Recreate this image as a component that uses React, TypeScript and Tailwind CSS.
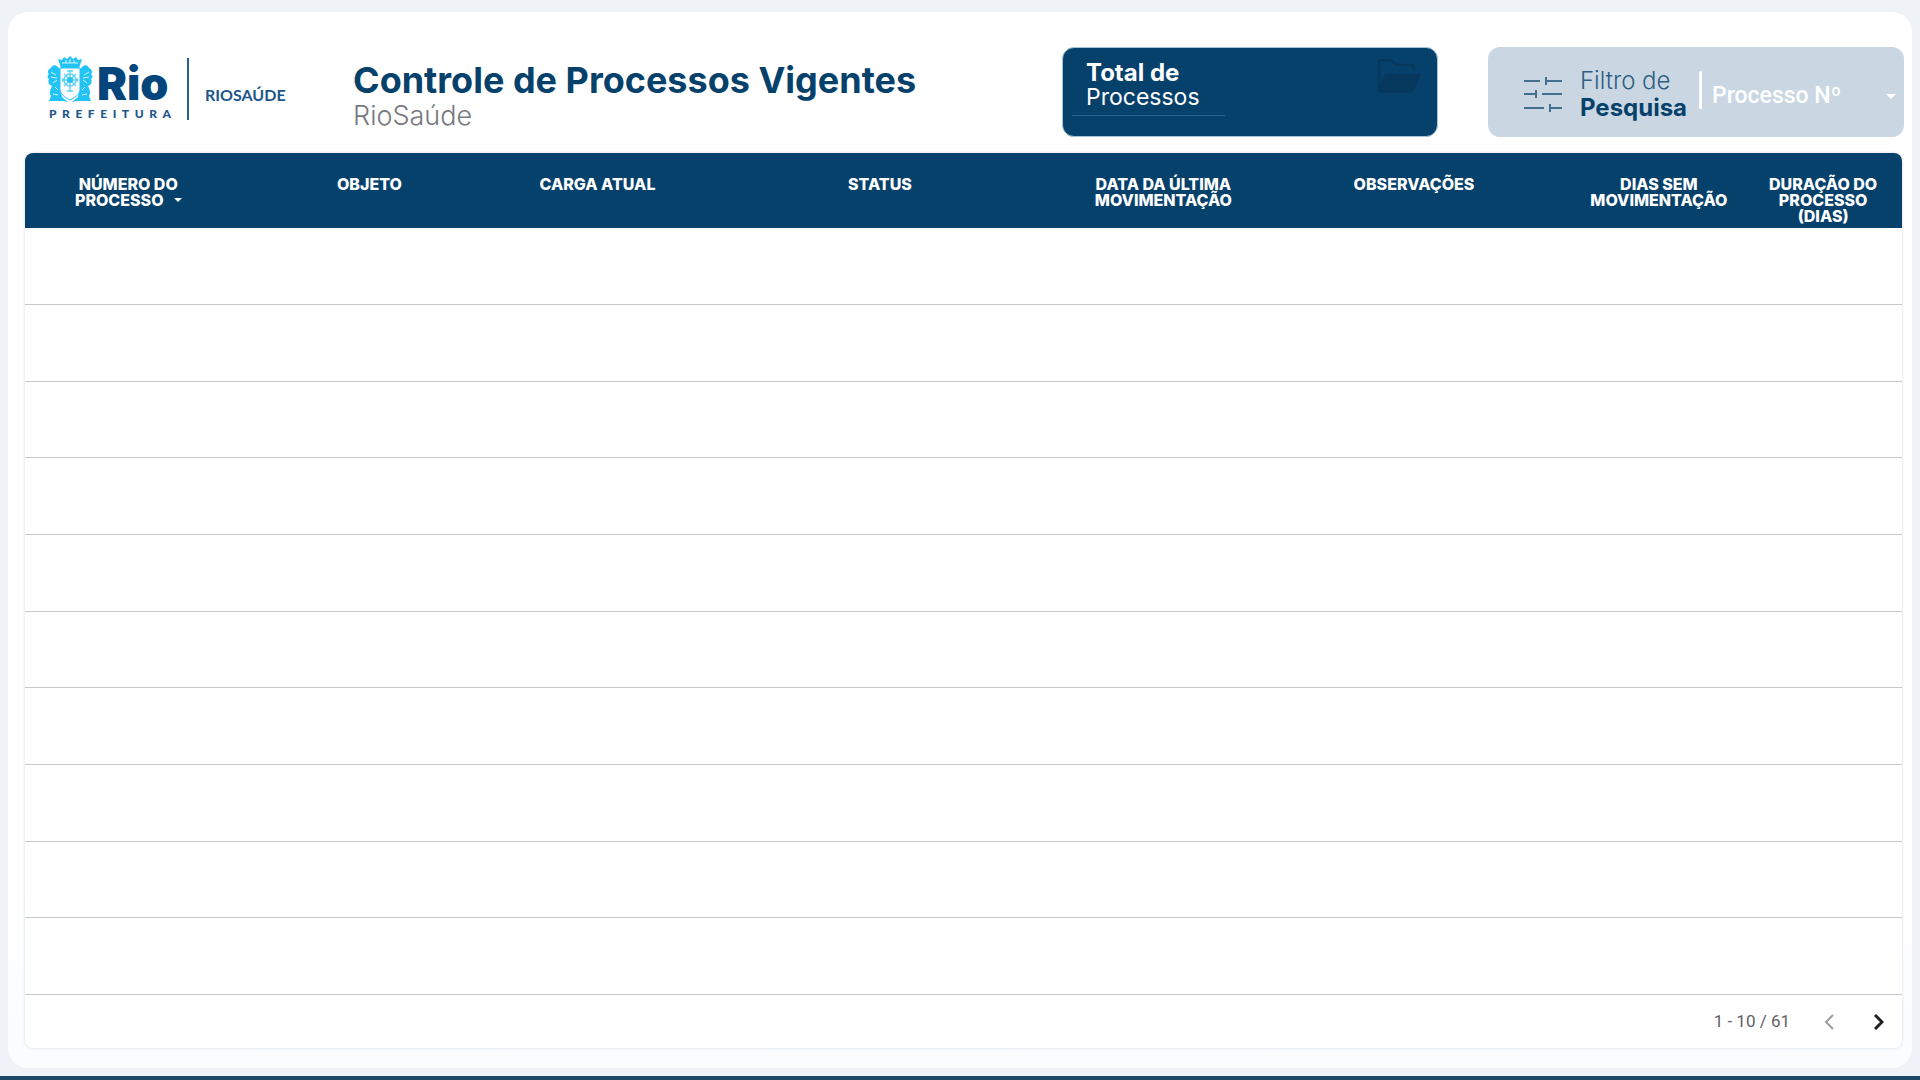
const columns = [
  { lines: ["NÚMERO DO", "PROCESSO"], width: "w-[11%]", sorted: true },
  { lines: ["OBJETO"], width: "w-[14.7%]" },
  { lines: ["CARGA ATUAL"], width: "w-[9.6%]" },
  { lines: ["STATUS"], width: "w-[20.5%]" },
  { lines: ["DATA DA ÚLTIMA", "MOVIMENTAÇÃO"], width: "w-[9.7%]" },
  { lines: ["OBSERVAÇÕES"], width: "w-[17%]" },
  { lines: ["DIAS SEM", "MOVIMENTAÇÃO"], width: "w-[9.1%]" },
  { lines: ["DURAÇÃO DO", "PROCESSO", "(DIAS)"], width: "w-[8.4%]" },
];

const rows = Array.from({ length: 10 }, (_, i) => i);

function Crest() {
  return (
    <svg viewBox="0 0 46 46" className="h-[46px] w-[46px]" aria-hidden="true">
      <g fill="#22c3f6">
        <path d="M11 3l4 1 2-3 3 2 3-3 3 3 3-2 2 3 4-1-3 9H14z" />
        <path d="M11 11C8 8 5 9 4 12c-3 1-4 5-2 6-2 2-2 4 0 5-1 2-1 4 1 6l2 1c-2 4-3 7-1 10l-2 5h14l5 1-6-5-2-10V13z" />
        <path d="M35 11c3-3 6-2 7 1 3 1 4 5 2 6 2 2 2 4 0 5 1 2 1 4-1 6l-2 1c2 4 3 7 1 10l2 5H30l-5 1 6-5 2-10V13z" />
      </g>
      <path d="M13 12h20v21c0 5-4 8-10 11-6-3-10-6-10-11z" fill="#fff" stroke="#22c3f6" strokeWidth="1" />
      <g fill="none" stroke="#5fd2f6" strokeWidth="1.4">
        <circle cx="23" cy="24" r="6" />
        <path d="M23 14v22M15 24h16M17 18l12 12M29 18L17 30" />
        <path d="M20 15h6M20 35h6M16 22v4M30 22v4" />
      </g>
      <circle cx="23" cy="24" r="3" fill="#22c3f6" />
      <g stroke="#d8f4fd" strokeWidth="1" fill="none">
        <path d="M15 7h16M19 4v3M23 3v4M27 4v3" />
        <path d="M4 16l5 3M4 21l6 1M6 27l4-3M8 31l3 3M6 38l5 1" />
        <path d="M42 16l-5 3M42 21l-6 1M40 27l-4-3M38 31l-3 3M40 38l-5 1" />
      </g>
    </svg>
  );
}

function Logo() {
  return (
    <div className="flex items-center text-[#04467c]">
      <div className="w-[124px]">
        <div className="flex items-end gap-1">
          <Crest />
          <span className="text-[45px] leading-9 font-black">Rio</span>
        </div>
        <div className="mt-1 flex justify-between pl-[2px] font-['Lato'] text-[12px] leading-4 font-black text-[#1d568a]">
          {"PREFEITURA".split("").map((letter, i) => (
            <span key={i}>{letter}</span>
          ))}
        </div>
      </div>
      <div className="ml-4 h-[62px] w-[2px] bg-[#2c5f8c]" />
      <span className="mt-3 ml-4 font-['Lato'] text-[16px] leading-5 font-bold text-[#1d568a]">RIOSAÚDE</span>
    </div>
  );
}

function Caret({ className }: { className: string }) {
  return (
    <svg viewBox="0 0 10 5" className={className} aria-hidden="true">
      <path d="M0 0h10L5 5z" fill="currentColor" />
    </svg>
  );
}

function TotalCard() {
  return (
    <section className="flex h-[90px] w-[376px] items-start justify-between rounded-xl border border-[#a9c3d8] bg-[#06416c] pr-4 pl-[9px] text-white">
      <div className="w-[153px] border-b border-[#2d608a] pt-[13px] pb-[6px] pl-[14px]">
        <h2 className="text-[24px] leading-6 font-bold">Total de</h2>
        <p className="text-[23px] leading-6">Processos</p>
      </div>
      <svg viewBox="0 0 44 34" className="mt-[11px] h-[34px] w-11" aria-hidden="true">
        <path d="M2 30V4q0-3 3-3h8q2 0 4 3 1 2 4 2h13q3 0 3 3v2" fill="none" stroke="#06385e" strokeWidth="2.5" />
        <path d="M2 33q-2-1-1-4l6-12q1-2 4-2h33l-7 16q-1 3-4 3H5q-2 0-3-1z" fill="#06385e" />
      </svg>
    </section>
  );
}

function FilterCard() {
  return (
    <section className="flex h-[90px] w-[416px] items-center rounded-xl bg-[#cad7e2] pr-2 pl-9">
      <svg viewBox="0 0 38 36" className="mt-1 h-9 w-[38px] shrink-0" fill="none" stroke="#44708f" strokeWidth="2" aria-hidden="true">
        <path d="M0 5h16M22 5h16M22 1v8M0 18h12M12 14v8M18 18h20M0 32h20M26 32h12M26 28v8" />
      </svg>
      <div className="ml-[18px] w-[107px] pt-[3px] text-[#06416c]">
        <p className="text-[24px] leading-[27px] font-light text-[#2d5f84]">Filtro de</p>
        <p className="text-[24px] leading-[27px] font-bold">Pesquisa</p>
      </div>
      <div className="mb-1 ml-3 h-[38px] w-[3px] rounded bg-white" />
      <div className="relative ml-[10px] flex flex-1 items-center pt-2 text-white">
        <select
          aria-label="Processo Nº"
          className="w-full appearance-none bg-transparent font-['Roboto'] text-[23px] leading-8 font-medium outline-none"
        >
          <option>Processo Nº</option>
        </select>
        <Caret className="pointer-events-none absolute right-0 h-[5px] w-[10px]" />
      </div>
    </section>
  );
}

export default function App() {
  return (
    <div className="flex min-h-screen flex-col bg-[#eff3f7] font-['Inter',sans-serif]">
      <main className="mx-2 mt-3 mb-2 flex flex-1 flex-col rounded-[20px] bg-linear-to-b from-white from-80% to-[#fafcfe] pr-[10px] pb-5 pl-[17px]">
        <header className="-mr-[2px] flex h-[141px] items-center pt-[35px] pb-4">
          <div className="w-[328px] shrink-0 pb-[6px] pl-[22px]">
            <Logo />
          </div>
          <div className="pt-2">
            <h1 className="text-[36px] leading-10 font-bold text-[#06416c]">Controle de Processos Vigentes</h1>
            <p className="text-[27px] leading-8 font-light text-[#76797d]">RioSaúde</p>
          </div>
          <div className="ml-auto flex gap-[50px]">
            <TotalCard />
            <FilterCard />
          </div>
        </header>

        <section className="flex flex-1 flex-col overflow-hidden rounded-lg bg-white shadow-[0_0_3px_#cfdbe5]">
          <div className="grid flex-1">
            <table className="h-full w-full table-fixed border-collapse">
              <thead>
                <tr className="h-[75px] bg-[#06416c] text-white">
                  {columns.map((column, i) => (
                    <th key={i} scope="col" className={`${column.width} pt-[23px] align-top text-[16px] leading-4 font-extrabold whitespace-nowrap`}>
                      {column.lines.map((line, j) => (
                        <div key={line} className="flex items-center justify-center gap-[10px]">
                          {line}
                          {column.sorted && j === 1 && <Caret className="h-1 w-2" />}
                        </div>
                      ))}
                    </th>
                  ))}
                </tr>
              </thead>
              <tbody>
                {rows.map((row) => (
                  <tr key={row} className="h-[76px] border-b border-[#c4c8ca]">
                    {columns.map((_, i) => (
                      <td key={i} />
                    ))}
                  </tr>
                ))}
              </tbody>
            </table>
          </div>
          <footer className="flex h-[53px] items-center justify-end pr-[18px] font-['Roboto'] text-[17px] text-[#5f6165]">
            <span>1 - 10 / 61</span>
            <button type="button" aria-label="Página anterior" disabled className="ml-[34px] text-[#9c9c9c]">
              <svg viewBox="0 0 10 16" className="h-4 w-[10px]" fill="none" stroke="currentColor" strokeWidth="2">
                <path d="M9 1L2 8l7 7" />
              </svg>
            </button>
            <button type="button" aria-label="Próxima página" className="ml-10 text-[#1f1f1f]">
              <svg viewBox="0 0 10 16" className="h-4 w-[10px]" fill="none" stroke="currentColor" strokeWidth="3">
                <path d="M1 1l7 7-7 7" />
              </svg>
            </button>
          </footer>
        </section>
      </main>
      <div className="h-1 bg-[#1f4867]" />
    </div>
  );
}
